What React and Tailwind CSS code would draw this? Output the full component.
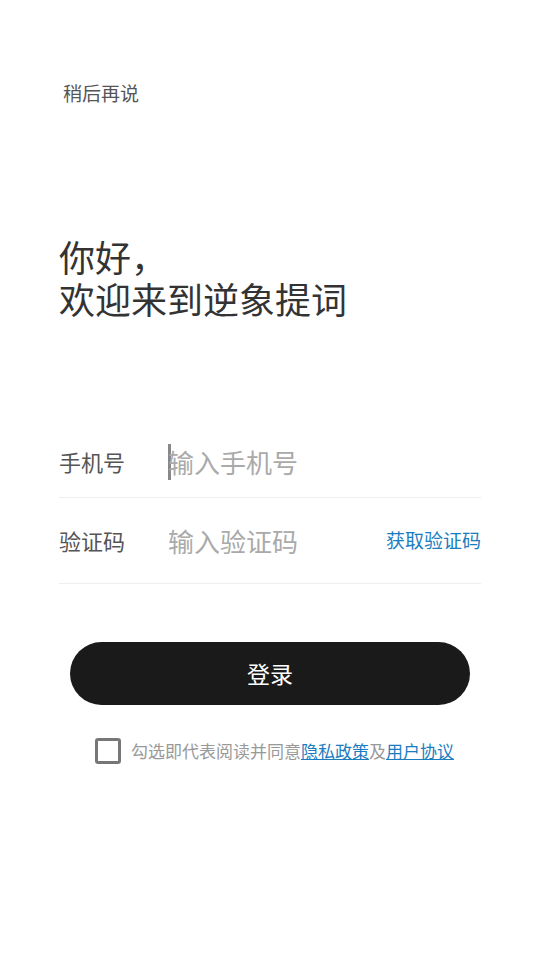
import { useState } from "react";

const font = { fontFamily: '"Noto Sans CJK SC", "Noto Sans", sans-serif' };

export default function App() {
  const [agreed, setAgreed] = useState(false);

  return (
    <div className="min-h-[960px] w-[540px] bg-white" style={font}>
      <div className="px-[59px] pt-[78px]">
        {/* Skip */}
        <button className="ml-[4px] text-[19px] leading-[30px] text-[#555]">稍后再说</button>

        {/* Greeting */}
        <div className="mt-[127px] text-[36px] text-[#333]">
          <p className="h-[42px] leading-[42px]">你好，</p>
          <p className="h-[42px] leading-[42px]">欢迎来到逆象提词</p>
        </div>

        {/* Form */}
        <div className="mt-[101px]">
          <div className="flex h-[78px] items-center border-b border-[#eeeeee] pt-[6px]">
            <span className="w-[109px] text-[22px] text-[#555]">手机号</span>
            <div className="flex items-center">
              <span className="h-[36px] w-[3px] bg-[#888]"></span>
              <span className="-ml-[3px] text-[26px] text-[#aaa]">输入手机号</span>
            </div>
          </div>
          <div className="flex h-[86px] items-center border-b border-[#eeeeee]">
            <span className="w-[109px] text-[22px] text-[#555]">验证码</span>
            <span className="flex-1 text-[26px] text-[#aaa]">输入验证码</span>
            <button className="text-[19px] text-[#1a7dbf]">获取验证码</button>
          </div>
        </div>

        {/* Login */}
        <div className="mt-[58px] px-[11px]">
          <button className="flex h-[63px] w-full items-center justify-center rounded-full bg-[#1a1a1a] text-[23px] text-white">
            登录
          </button>
        </div>

        {/* Agreement */}
        <div className="mt-[33px] flex items-center justify-center pl-[9px]">
          <button
            onClick={() => setAgreed(!agreed)}
            className="flex h-[26px] w-[26px] items-center justify-center rounded-[3px] border-[3px] border-[#777]"
          >
            {agreed && <span className="h-[12px] w-[12px] bg-[#777]"></span>}
          </button>
          <p className="ml-[10px] text-[17px] text-[#999]">
            勾选即代表阅读并同意
            <a className="text-[#1a7dbf] underline">隐私政策</a>
            及
            <a className="text-[#1a7dbf] underline">用户协议</a>
          </p>
        </div>
      </div>
    </div>
  );
}
